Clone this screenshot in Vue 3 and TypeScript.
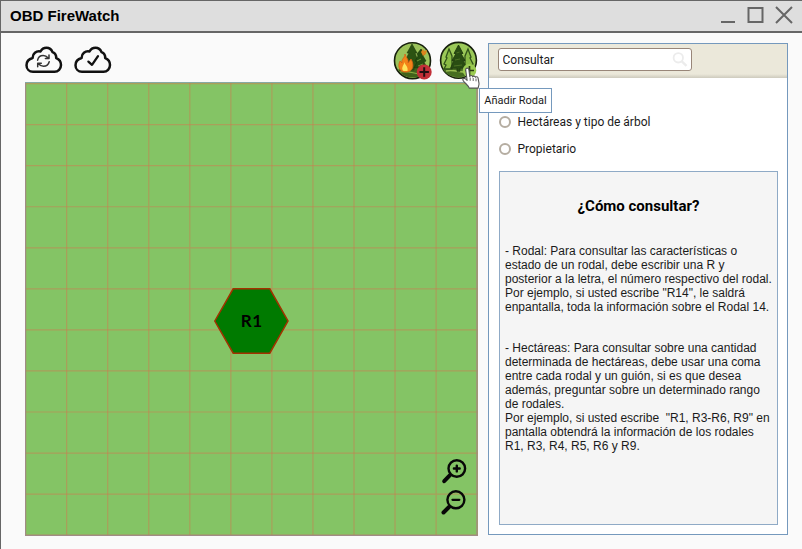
<script setup lang="ts">
import { ref } from 'vue'

const query = ref('Consultar')
const mode = ref('')
const filters: string[] = ['', 'Hectáreas y tipo de árbol', 'Propietario']
const lines: number[] = Array.from({ length: 12 }, (_, i) => 0.6 + i * 41.05)
const rodalHelp: string[] = [
  '- Rodal: Para consultar las características o',
  'estado de un rodal, debe escribir una R y',
  'posterior a la letra, el número respectivo del rodal.',
  'Por ejemplo, si usted escribe "R14", le saldrá',
  'enpantalla, toda la información sobre el Rodal 14.',
]
const hectareHelp: string[] = [
  '- Hectáreas: Para consultar sobre una cantidad',
  'determinada de hectáreas, debe usar una coma',
  'entre cada rodal y un guión, si es que desea',
  'además, preguntar sobre un determinado rango',
  'de rodales.',
  'Por ejemplo, si usted escribe  "R1, R3-R6, R9" en',
  'pantalla obtendrá la información de los rodales',
  'R1, R3, R4, R5, R6 y R9.',
]
</script>

<template>
  <div class="window">
    <header class="titlebar">
      <h1>OBD FireWatch</h1>
      <svg class="controls" width="76" height="22" viewBox="0 0 76 22" fill="none" stroke="#666" stroke-width="2">
        <path d="M1 18h14" />
        <path d="M28.5 4h14v14h-14z" />
        <path d="M56 3l16 16M72 3l-16 16" />
      </svg>
    </header>

    <main class="content">
      <section class="workspace">
        <div class="toolbar">
          <button class="cloud" aria-label="Sincronizar">
            <svg width="38" height="28" viewBox="0 0 38 28" fill="none" stroke="#111" stroke-linecap="round" stroke-linejoin="round">
              <path stroke-width="2.5" d="M8 25.8h21.500a6.700 6.700 0 0 0 6.500-6.700c0-3.600-2.200-5.900-4.800-6.900.2-3.300-1.400-5.300-3.700-6.100-1.200-3-3.500-4.300-6-4.300-2.700 0-4.800 1.400-6 3.700C11.300 4.600 7.500 7.700 7.600 12 3.800 13 1.500 15.700 1.500 19.200c0 3.900 2.800 6.600 6.500 6.600z" />
              <g stroke="#333" stroke-width="1.500">
                <path d="M12.600 14.200c.6-3 2.900-4.700 5.600-4.700 2 0 3.500.8 4.800 2.300M24 9v3.500h-3.600" />
                <path d="M24.200 15.700c-.7 2.800-2.900 4.500-5.700 4.500-2 0-3.700-.9-4.900-2.500M12.700 20.800v-3.500h3.600" />
              </g>
            </svg>
          </button>
          <button class="cloud" aria-label="Confirmar">
            <svg width="38" height="28" viewBox="0 0 38 28" fill="none" stroke="#111" stroke-linecap="round" stroke-linejoin="round">
              <path stroke-width="2.500" d="M8 25.8h21.500a6.700 6.700 0 0 0 6.500-6.700c0-3.600-2.200-5.900-4.800-6.900.2-3.300-1.400-5.300-3.700-6.100-1.200-3-3.500-4.300-6-4.300-2.700 0-4.800 1.400-6 3.700C11.300 4.600 7.500 7.700 7.600 12 3.800 13 1.500 15.700 1.500 19.200c0 3.900 2.800 6.600 6.500 6.600z" />
              <path stroke-width="2.300" d="M14.400 15.600l3.600 3.200 6-8.700" />
            </svg>
          </button>
          <span class="spacer"></span>
          <button class="round" aria-label="Añadir incendio">
            <svg width="40" height="40" viewBox="0 0 40 40">
              <circle cx="19.500" cy="19.700" r="18" fill="#9bc35a" stroke="#17200d" stroke-width="1.600" />
              <path d="M5 28.500c8-1.800 20-1.800 29 0-2.800 5-8 8-14.500 8S7.800 33.500 5 28.500z" fill="#40621b" />
              <path d="M7 31c8-2 14 2 21 2" stroke="#88ad43" stroke-width="1.200" fill="none" />
              <path d="M19 3l-5 9h2l-4 8h3l-3 7h6v2h3v-2h6l-4-7h2l-3-8h2z" fill="#2c5312" stroke="#1e3a0d" stroke-width=".6" />
              <path d="M28 8l-4 5 1 2-3 5 2 1-3 6h5v3h2v-3h6l-3-6 2-1-3-5 2-2z" fill="#254d11" stroke="#173409" stroke-width=".6" />
              <path d="M28 11l2-3 1 2 3-1-1 4-3 2z" fill="#dc851e" />
              <path d="M24 20l4-2M25 25l5-2" stroke="#6f9437" />
              <path d="M12 13c1 4 4 5 3 9l3-4c3 5 3 12-4 13-7 1-10-5-7-11l2 2c-1-4 3-5 3-9z" fill="#f28318" stroke="#d65f16" stroke-width=".8" />
              <path d="M11.500 21c0 3 4 4 3 9h-4c-3-3 0-5 1-9z" fill="#ffe45c" />
              <circle cx="31.200" cy="31" r="7.500" fill="#c22f38" />
              <path d="M31.200 26.300v9.400M26.500 31h9.400" stroke="#211012" stroke-width="2" />
            </svg>
          </button>
          <button class="round add" aria-label="Añadir Rodal">
            <svg width="40" height="40" viewBox="0 0 40 40">
              <circle cx="19.500" cy="19.300" r="17.900" fill="#9bc958" stroke="#17200d" stroke-width="1.600" />
              <path d="M4 28.500c8-1.300 23-1.300 31 0-3 5-9 7.700-15.500 7.700S7 33.500 4 28.500z" fill="#466d20" />
              <path d="M7 30c8-2 14 2 22 1" stroke="#99bc52" stroke-width="1.500" fill="none" />
              <g fill="#8abb45" stroke="#315319" stroke-width="1.300">
                <path d="M10 8l-3 8 1 1-3 6 2 1-2 4h8V15z" />
                <path d="M29 8l3 8-1 1 3 6-2 1 2 4h-8V15z" />
              </g>
              <path d="M19.500 4l-4.500 8.500h2l-4 7h2l-3.500 7.800h6.500v3h3v-3h6.500L24 19.500h2l-4-7h2z" fill="#294d12" stroke="#1d360d" stroke-width=".8" />
              <path d="M17.500 12l3-1M16 19l5-1M15 25l8-1" stroke="#4d7225" />
              <circle cx="30.500" cy="29.500" r="6.800" fill="#9bcb51" />
              <path d="M30.500 25v9M26 29.500h9" stroke="#26380f" stroke-width="1.700" />
            </svg>
            <svg class="pointer" width="20" height="23" viewBox="0 0 20 23">
              <path d="M4.700 2.700c0-2.100 3-2.100 3.200 0l.9 7c.1-1.700 2.700-1.500 2.900.2.400-1.300 2.500-.9 2.800.4.600-1 2.400-.5 2.600.9l.9 5.200c.2 2-.8 2.600-.8 4.700H8.200c-.8-2.700-3.900-4.500-6-7.400-1.200-1.700.7-3.100 2.300-1.800l1.600 1.400z" fill="#fff" stroke="#555" stroke-width="1.100" stroke-linejoin="round" />
              <path d="M9.200 10.500v3.300M12.200 11v3M15 11.500v2.800" stroke="#555" stroke-width=".9" />
            </svg>
            <span class="tooltip">Añadir Rodal</span>
          </button>
        </div>

        <div class="map">
          <svg width="453" height="454" viewBox="0 0 453 454">
            <rect width="453" height="454" fill="#84c465" />
            <g stroke="#d07a50" stroke-opacity=".5" stroke-width="1.200">
              <path v-for="p in lines" :key="p" :d="`M${p} 0v454M0 ${p + 1}h453`" />
            </g>
            <path d="M0 .5h453" stroke="#85aaa5" />
            <path d="M.5 1v453M452 1v453M0 453.300h453" fill="none" stroke="#a08c86" stroke-width="1.200" />
            <path d="M189.800 239L208.200 206.800h36.600L263 239l-18.200 32.200h-36.600z" fill="#007a00" stroke="#a33100" stroke-width="1.500" />
            <text x="226.800" y="244.700" text-anchor="middle">R1</text>
          </svg>
          <div class="zoom">
            <svg width="27" height="28" viewBox="0 0 27 28" fill="none" stroke="#080808" stroke-linecap="round">
              <circle cx="15.800" cy="10.500" r="8.300" stroke-width="2.400" />
              <path d="M9 17.200l-5.800 6" stroke-width="4" />
              <path d="M15.800 7.600v5.800M12.900 10.500h5.800" stroke-width="2.400" />
            </svg>
            <svg width="27" height="28" viewBox="0 0 27 28" fill="none" stroke="#080808" stroke-linecap="round">
              <circle cx="14.900" cy="10.800" r="8.500" stroke-width="2.400" />
              <path d="M8 18l-5.500 5.500" stroke-width="4" />
              <path d="M11.500 10.800h6.800" stroke-width="2.300" />
            </svg>
          </div>
        </div>
      </section>

      <aside class="panel">
        <div class="searchbar">
          <label class="search">
            <input v-model="query" aria-label="Consultar" />
            <svg width="16" height="16" viewBox="0 0 16 16" fill="none" stroke="#ececec" stroke-width="1.800">
              <circle cx="6.300" cy="5.800" r="4.700" />
              <path d="M9.800 9.300l4.700 4.500" stroke-width="2.400" />
            </svg>
          </label>
        </div>
        <div class="filters">
          <label v-for="name in filters" :key="name">
            <input v-model="mode" type="radio" name="filter" :value="name || 'rodal'" />
            <span>{{ name }}</span>
          </label>
        </div>
        <article class="help">
          <h2>¿Cómo consultar?</h2>
          <p>{{ rodalHelp.join('\n') }}</p>
          <p>{{ hectareHelp.join('\n') }}</p>
        </article>
      </aside>
    </main>
  </div>
</template>

<style>
body {
  overflow: hidden;
}
</style>

<style scoped>
* {
  box-sizing: border-box;
}
.window {
  height: 549px;
  background: #fafafa;
  border-left: 1px solid #666;
  font-family: Roboto, "Liberation Sans", sans-serif;
  font-size: 12px;
  color: #1b1b1b;
}
.titlebar {
  display: flex;
  align-items: center;
  justify-content: space-between;
  height: 33px;
  padding: 0 6px 0 9px;
  border-top: 1px solid #666;
  border-bottom: 2px solid #666;
  background: #dedede;
}
h1 {
  margin: 0;
  font-family: "Liberation Sans", Arial, sans-serif;
  font-size: 15px;
  font-weight: 700;
  line-height: 20px;
  color: #000;
}
.controls {
  display: block;
  margin-bottom: 2px;
}
.content {
  display: flex;
  align-items: flex-start;
  gap: 10px;
  padding-left: 24px;
}
.workspace {
  width: 453px;
}
.toolbar {
  display: flex;
  align-items: flex-start;
  height: 49px;
  padding-top: 8px;
}
button {
  padding: 0;
  border: 0;
  background: none;
  font: inherit;
  color: inherit;
}
button svg {
  display: block;
}
.cloud {
  width: 38px;
  margin: 5px 11px 0 0;
}
.spacer {
  flex: 1;
}
.round {
  position: relative;
  width: 40px;
  margin-right: 6px;
}
.round.add {
  margin-right: -1px;
}
.pointer {
  position: absolute;
  left: 22px;
  top: 26px;
  z-index: 3;
}
.tooltip {
  position: absolute;
  left: 40px;
  top: 47px;
  z-index: 2;
  width: 73px;
  height: 25px;
  border: 1px solid #7599bd;
  background: #fff;
  font-size: 11px;
  line-height: 23px;
  text-align: center;
  white-space: nowrap;
}
.map {
  position: relative;
  height: 454px;
}
.map svg {
  display: block;
}
.map text {
  font: 700 17px Lato, sans-serif;
  letter-spacing: 0.6px;
  fill: #000;
}
.zoom {
  position: absolute;
  left: 416px;
  top: 376px;
  display: grid;
  gap: 3px;
}
.panel {
  width: 300px;
  height: 492px;
  margin-top: 10px;
  border: 1px solid #7599bd;
  background: #fff;
}
.searchbar {
  height: 34px;
  padding: 4px 9px;
  background: linear-gradient(#ebe8da 0 30px, #cdcabd 34px);
}
.search {
  display: flex;
  align-items: center;
  width: 194px;
  height: 23px;
  padding: 0 3px;
  border: 1px solid #988679;
  border-radius: 3px;
  background: #fff;
}
.search input {
  flex: 1;
  min-width: 0;
  padding: 0 0 0 0.5px;
  border: 0;
  outline: 0;
  background: none;
  font: inherit;
  color: inherit;
}
.filters {
  display: grid;
  gap: 13px;
  padding: 10px 0 0 10px;
}
.filters label {
  display: flex;
  align-items: center;
  gap: 6.5px;
  height: 14px;
}
.filters label:first-child input {
  margin-top: -3px;
}
.filters input {
  appearance: none;
  width: 12px;
  height: 12px;
  margin: 0;
  border: 2px solid #b5ada1;
  border-radius: 50%;
  background: #fff;
}
.help {
  width: 279px;
  height: 354px;
  margin: 15px 0 0 10px;
  padding: 25px 5px 0;
  border: 1px solid #8faac6;
  background: #f5f5f5;
}
h2 {
  margin: 0 0 29px;
  font-size: 15px;
  font-weight: 700;
  line-height: 18px;
  text-align: center;
  color: #000;
}
p {
  margin: 0 0 27px;
  font-family: "Liberation Sans", Arial, sans-serif;
  line-height: 14px;
  white-space: pre;
}
</style>
